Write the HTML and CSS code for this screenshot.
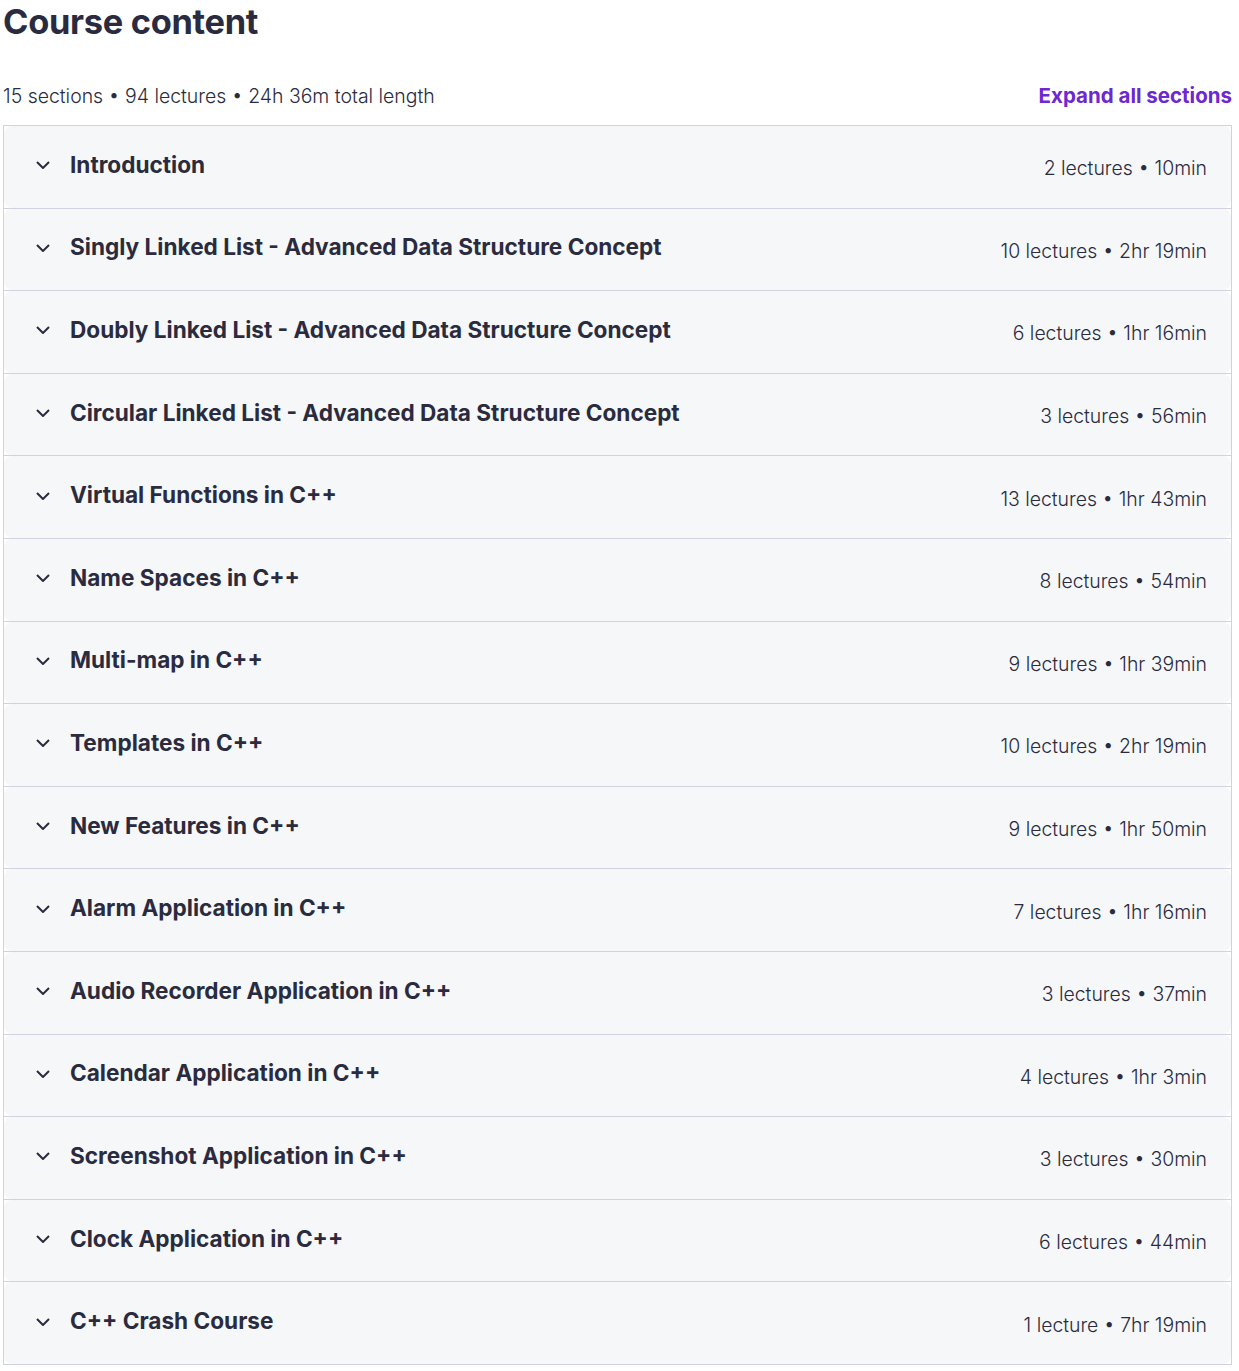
FILE: index.html
```html
<!DOCTYPE html>
<html lang="en">
<head>
<meta charset="utf-8">
<title>Course content</title>
<link rel="stylesheet" href="styles.css">
</head>
<body>
<div class="page">
  <h2 class="heading">Course content</h2>
  <div class="summary">
    <span class="summary-text">15 sections • 94 lectures • 24h 36m total length</span>
    <button class="expand-all" type="button">Expand all sections</button>
  </div>
  <div class="accordion">
    <div class="section"><div class="panel"><svg class="chevron" viewBox="0 0 14 8"><path d="M1 1l6 6 6-6"/></svg><span class="title">Introduction</span><span class="meta">2 lectures • 10min</span></div></div>
    <div class="section"><div class="panel"><svg class="chevron" viewBox="0 0 14 8"><path d="M1 1l6 6 6-6"/></svg><span class="title">Singly Linked List - Advanced Data Structure Concept</span><span class="meta">10 lectures • 2hr 19min</span></div></div>
    <div class="section"><div class="panel"><svg class="chevron" viewBox="0 0 14 8"><path d="M1 1l6 6 6-6"/></svg><span class="title">Doubly Linked List - Advanced Data Structure Concept</span><span class="meta">6 lectures • 1hr 16min</span></div></div>
    <div class="section"><div class="panel"><svg class="chevron" viewBox="0 0 14 8"><path d="M1 1l6 6 6-6"/></svg><span class="title">Circular Linked List - Advanced Data Structure Concept</span><span class="meta">3 lectures • 56min</span></div></div>
    <div class="section"><div class="panel"><svg class="chevron" viewBox="0 0 14 8"><path d="M1 1l6 6 6-6"/></svg><span class="title">Virtual Functions in C++</span><span class="meta">13 lectures • 1hr 43min</span></div></div>
    <div class="section"><div class="panel"><svg class="chevron" viewBox="0 0 14 8"><path d="M1 1l6 6 6-6"/></svg><span class="title">Name Spaces in C++</span><span class="meta">8 lectures • 54min</span></div></div>
    <div class="section"><div class="panel"><svg class="chevron" viewBox="0 0 14 8"><path d="M1 1l6 6 6-6"/></svg><span class="title">Multi-map in C++</span><span class="meta">9 lectures • 1hr 39min</span></div></div>
    <div class="section"><div class="panel"><svg class="chevron" viewBox="0 0 14 8"><path d="M1 1l6 6 6-6"/></svg><span class="title">Templates in C++</span><span class="meta">10 lectures • 2hr 19min</span></div></div>
    <div class="section"><div class="panel"><svg class="chevron" viewBox="0 0 14 8"><path d="M1 1l6 6 6-6"/></svg><span class="title">New Features in C++</span><span class="meta">9 lectures • 1hr 50min</span></div></div>
    <div class="section"><div class="panel"><svg class="chevron" viewBox="0 0 14 8"><path d="M1 1l6 6 6-6"/></svg><span class="title">Alarm Application in C++</span><span class="meta">7 lectures • 1hr 16min</span></div></div>
    <div class="section"><div class="panel"><svg class="chevron" viewBox="0 0 14 8"><path d="M1 1l6 6 6-6"/></svg><span class="title">Audio Recorder Application in C++</span><span class="meta">3 lectures • 37min</span></div></div>
    <div class="section"><div class="panel"><svg class="chevron" viewBox="0 0 14 8"><path d="M1 1l6 6 6-6"/></svg><span class="title">Calendar Application in C++</span><span class="meta">4 lectures • 1hr 3min</span></div></div>
    <div class="section"><div class="panel"><svg class="chevron" viewBox="0 0 14 8"><path d="M1 1l6 6 6-6"/></svg><span class="title">Screenshot Application in C++</span><span class="meta">3 lectures • 30min</span></div></div>
    <div class="section"><div class="panel"><svg class="chevron" viewBox="0 0 14 8"><path d="M1 1l6 6 6-6"/></svg><span class="title">Clock Application in C++</span><span class="meta">6 lectures • 44min</span></div></div>
    <div class="section"><div class="panel"><svg class="chevron" viewBox="0 0 14 8"><path d="M1 1l6 6 6-6"/></svg><span class="title">C++ Crash Course</span><span class="meta">1 lecture • 7hr 19min</span></div></div>
  </div>
</div>
</body>
</html>
```

FILE: styles.css
```css
html, body {
  margin: 0;
  padding: 0;
  background: #ffffff;
}

body {
  font-family: Inter, "Noto Sans", "Liberation Sans", sans-serif;
  color: #2a2b3f;
}

.page {
  width: 1229px;
  margin-left: 3px;
}

.heading {
  margin: 0;
  font-size: 34.4px;
  line-height: 43px;
  font-weight: 700;
  letter-spacing: -0.3px;
  color: #2a2b3f;
}

.summary {
  display: flex;
  align-items: center;
  justify-content: space-between;
  margin-top: 41px;
  height: 24px;
  margin-bottom: 17px;
}

.summary-text {
  font-size: 19.45px;
  line-height: 24px;
  font-weight: 300;
  color: #2a2b3f;
}

.expand-all {
  border: 0;
  background: none;
  padding: 0;
  font-family: inherit;
  font-size: 20.5px;
  line-height: 24px;
  font-weight: 700;
  color: #6d28d2;
  cursor: pointer;
}

.accordion {
  border: 1px solid #d1d2e0;
}

.section + .section {
  border-top: 1px solid #d1d2e0;
}

.panel {
  display: flex;
  align-items: center;
  height: 81.6px;
  box-sizing: border-box;
  padding: 0 24px 0 32px;
  background: #f6f7f9;
  border-radius: 8px;
}

.chevron {
  width: 14px;
  height: 8px;
  flex: none;
  margin-right: 20px;
  margin-top: -3px;
  fill: none;
  stroke: #2a2b3f;
  stroke-width: 2;
}

.title {
  flex: 1;
  font-size: 22.6px;
  line-height: 28px;
  font-weight: 700;
  margin-top: -4px;
  color: #2a2b3f;
}

.meta {
  font-size: 19.4px;
  line-height: 24px;
  font-weight: 300;
  margin-top: 3px;
  color: #2a2b3f;
}
```
